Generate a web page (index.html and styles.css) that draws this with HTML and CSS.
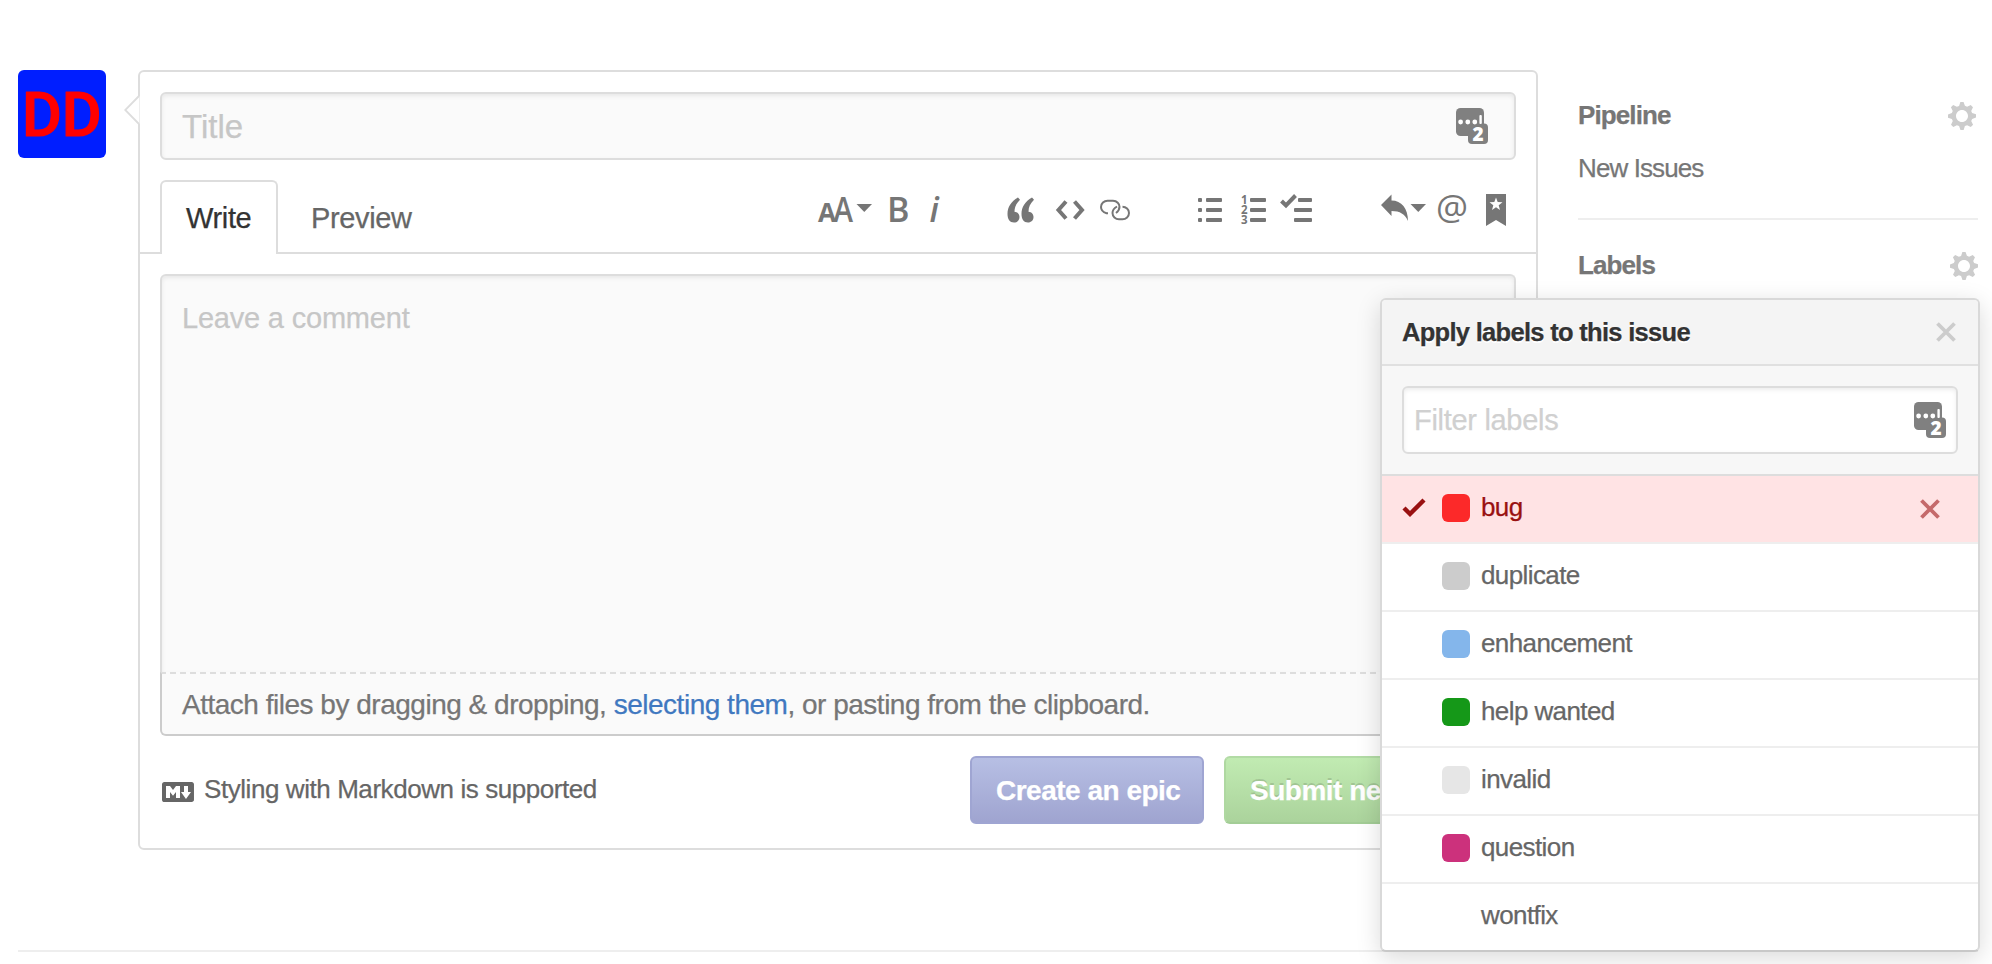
FILE: index.html
```html
<!DOCTYPE html>
<html lang="en">
<head>
<meta charset="utf-8">
<title>New Issue</title>
<link rel="stylesheet" href="styles.css">
</head>
<body>
<svg width="0" height="0" class="sprite" aria-hidden="true">
  <symbol id="gear" viewBox="0 1 14 14"><path fill-rule="evenodd" d="M14 8.77v-1.6l-1.94-.64-.45-1.09.88-1.84-1.13-1.13-1.81.91-1.09-.45-.69-1.92h-1.6l-.63 1.94-1.11.45-1.84-.88-1.13 1.13.91 1.81-.45 1.09L0 7.23v1.59l1.94.64.45 1.09-.88 1.84 1.13 1.13 1.81-.91 1.09.45.69 1.92h1.59l.63-1.94 1.11-.45 1.84.88 1.13-1.13-.92-1.81.47-1.09L14 8.75zM7 11c-1.66 0-3-1.34-3-3s1.34-3 3-3 3 1.34 3 3-1.34 3-3 3z"/></symbol>
  <symbol id="cross" viewBox="0 0 20 20"><path d="M1.500 1.500l17 17M18.500 1.500l-17 17" fill="none" stroke="currentColor" stroke-width="3.800"/></symbol>
  <symbol id="vault" viewBox="0 0 32 36">
    <rect width="28" height="28" rx="4.500"/><rect x="12" y="15.500" width="20" height="20.500" rx="4"/>
    <g fill="#fff"><circle cx="4.600" cy="14" r="2.400"/><circle cx="11.800" cy="14" r="2.400"/><circle cx="18.800" cy="14" r="2.400"/><rect x="23.400" y="7" width="2.400" height="9" rx="1"/></g>
  </symbol>
</svg>
<main class="page">
  <div class="columns">
    <svg class="avatar" viewBox="0 0 88 88"><text x="4" y="66" textLength="79.500" lengthAdjust="spacingAndGlyphs">DD</text></svg>
    <section class="composer">
      <svg class="pointer" viewBox="0 0 16 30"><path d="M15.500 1L1.200 15l14.300 14z" fill="#fff"/><path d="M15 1L1.200 15 15 29" fill="none" stroke="#ddd" stroke-width="1.800"/></svg>
      <div class="title-field"><span>Title</span><svg class="vault" viewBox="0 0 32 36"><use href="#vault"/><text x="22" y="33" text-anchor="middle" class="vault-count">2</text></svg></div>
      <div class="tabbar">
        <div class="tab active">Write</div>
        <div class="tab">Preview</div>
        <svg class="toolbar" viewBox="0 0 700 40">
          <g class="glyphs">
            <text x="2" y="32" font-size="27" font-weight="700" textLength="18" lengthAdjust="spacingAndGlyphs">A</text><text x="17.500" y="32" font-size="33.500" textLength="19.500" lengthAdjust="spacingAndGlyphs" font-weight="600">A</text>
            <path d="M40.500 14h15.500l-7.750 8z"/>
            <text x="71" y="32" font-size="33.500" font-weight="600" textLength="22.500" lengthAdjust="spacingAndGlyphs">B</text>
            <text x="113.500" y="32" font-size="34" font-style="italic" font-weight="600">i</text>
            <path d="M202 7.500l2 2.200c-4 4-5.500 7.500-5.500 12 3.300.2 5 2.700 5 5.300 0 3.200-2.300 5.500-5.500 5.500-4.200 0-6.500-3.500-6.500-8.500 0-7 3.500-12.500 10.500-16.500z"/>
            <path d="M216 7.500l2 2.200c-4 4-5.500 7.500-5.500 12 3.300.2 5 2.700 5 5.300 0 3.200-2.300 5.500-5.500 5.500-4.200 0-6.500-3.500-6.500-8.500 0-7 3.500-12.500 10.500-16.500z"/>
            <path d="M250 11.500l-7.500 8.500 7.500 8.500M258.500 11.500l7.500 8.500-7.500 8.500" class="line" stroke-width="4"/>
            <path d="M292 23.200h-1.500c-3.500-1-5.500-3.200-5.500-6.200 0-3.500 3-6.200 6.500-6.200h5.500c4 0 6.500 3 6.500 6 0 3-1.500 4.700-3.500 6.200M301 16.500c-2.500 1.500-4.500 3.500-4.500 6.500 0 3.500 3 6.200 6.500 6.200h3.500c3.500 0 6.500-2.700 6.500-6.200 0-3.500-3-6.200-6.500-6.200" class="line" stroke-width="2"/>
            <g><rect x="382" y="8" width="4" height="4" rx="1"/><rect x="382" y="18" width="4" height="4" rx="1"/><rect x="382" y="28" width="4" height="4" rx="1"/><rect x="390" y="8" width="16" height="4" rx="1"/><rect x="390" y="18" width="16" height="4" rx="1"/><rect x="390" y="28" width="16" height="4" rx="1"/></g>
            <g font-size="11.500" font-weight="700"><text x="425" y="14.300">1</text><text x="425" y="24.300">2</text><text x="425" y="34.300">3</text></g>
            <g><rect x="434" y="8" width="16" height="4" rx="1"/><rect x="434" y="18" width="16" height="4" rx="1"/><rect x="434" y="28" width="16" height="4" rx="1"/></g>
            <path d="M465.500 11l4.500 4.500L479.500 5.500" class="line" stroke-width="4"/><rect x="482" y="8" width="14" height="4" rx="1"/><rect x="478" y="18" width="18" height="4" rx="1"/><rect x="478" y="28" width="18" height="4" rx="1"/>
            <path d="M565 15L575.500 4.500v6c10 0 16.500 8 16.500 20.500-3-7-8-10-16.500-10v5z"/><path d="M594.500 14h15.500l-7.750 8z"/>
            <text x="620" y="29.500" font-size="35.500" textLength="32" lengthAdjust="spacingAndGlyphs">@</text>
            <path d="M670 4h20v32l-10-6-10 6z"/><path d="M680 7.500l1.700 4.600 4.800.2-3.800 3 1.300 4.700-4-2.700-4 2.700 1.300-4.700-3.800-3 4.800-.2z" fill="#fff"/>
          </g>
        </svg>
      </div>
      <div class="comment-field">Leave a comment</div>
      <div class="attach">Attach files by dragging &amp; dropping, <a>selecting them</a>, or pasting from the clipboard.</div>
      <div class="actions">
        <div class="markdown"><svg class="md" viewBox="0 3 16 10"><path fill-rule="evenodd" d="M14.850 3H1.150C.52 3 0 3.520 0 4.150v7.690C0 12.480.52 13 1.150 13h13.690c.64 0 1.150-.52 1.150-1.150v-7.700C16 3.520 15.480 3 14.850 3zM9 11H7V8L5.500 9.920 4 8v3H2V5h2l1.500 2L7 5h2v6zm2.990.5L9.500 8H11V5h2v3h1.500l-2.510 3.500z"/></svg><span>Styling with Markdown is supported</span></div>
        <div class="button epic">Create an epic</div>
        <div class="button submit">Submit new issue</div>
      </div>
    </section>
    <aside class="sidebar">
      <section class="side-block pipeline">
        <header>Pipeline<svg class="gear shifted"><use href="#gear"/></svg></header>
        <p>New Issues</p>
      </section>
      <section class="side-block labels">
        <header>Labels<svg class="gear"><use href="#gear"/></svg></header>
        <div class="menu">
          <div class="menu-header">Apply labels to this issue<svg class="cross"><use href="#cross"/></svg></div>
          <div class="menu-filter"><div class="filter-field"><span>Filter labels</span><svg class="vault" viewBox="0 0 32 36"><use href="#vault"/><text x="22" y="33" text-anchor="middle" class="vault-count">2</text></svg></div></div>
          <ul>
            <li class="selected"><svg class="check" viewBox="0 0 24 20"><path d="M2 10l6 6L22 2" fill="none" stroke="currentColor" stroke-width="4.400"/></svg><i class="swatch red"></i><span>bug</span><svg class="cross"><use href="#cross"/></svg></li>
            <li><i class="swatch gray"></i><span>duplicate</span></li>
            <li><i class="swatch blue"></i><span>enhancement</span></li>
            <li><i class="swatch green"></i><span>help wanted</span></li>
            <li><i class="swatch light"></i><span>invalid</span></li>
            <li><i class="swatch pink"></i><span>question</span></li>
            <li><i class="swatch"></i><span>wontfix</span></li>
          </ul>
        </div>
      </section>
    </aside>
  </div>
  <hr class="rule">
</main>
</body>
</html>
```
FILE: styles.css
```css
* { box-sizing: border-box; }
body {
  margin: 0;
  background: #fff;
  color: #666;
  font: 26px "Liberation Sans", Arial, sans-serif;
  -webkit-text-stroke: .25px currentColor;
  overflow: hidden;
}
svg { fill: currentColor; display: block; flex: none; -webkit-text-stroke: 0; }
.sprite { position: absolute; }
.page { height: 964px; padding: 70px 14px 0 18px; }
.columns { display: flex; align-items: flex-start; height: 880px; }

.avatar {
  width: 88px;
  height: 88px;
  margin-right: 32px;
  border-radius: 6px;
  background: #001eff;
  fill: #f00;
  font: 500 62px Roboto, sans-serif;
}
.avatar text { stroke: #f00; stroke-width: 1.2px; stroke-linejoin: round; }

.composer {
  position: relative;
  width: 1400px;
  height: 780px;
  padding-top: 20px;
  border: 2px solid #ddd;
  border-radius: 6px;
}
.pointer { position: absolute; left: -16px; top: 23px; width: 16px; height: 30px; }
.title-field, .comment-field, .filter-field {
  border: 2px solid #ddd;
  border-radius: 6px;
  background: #fafafa;
  box-shadow: inset 0 2px 4px rgba(0, 0, 0, .075);
  color: #c6c6c6;
}
.title-field {
  display: flex;
  justify-content: space-between;
  height: 68px;
  margin: 0 20px;
  padding: 14px 26px 0 20px;
  font-size: 33px;
  line-height: 38px;
}
.vault { width: 32px; height: 36px; color: #808080; overflow: visible; }
.vault-count { fill: #fff; font: 800 19px "Open Sans", sans-serif; letter-spacing: 0; }

.tabbar {
  display: flex;
  height: 74px;
  margin-top: 20px;
  padding: 0 2px 0 20px;
  box-shadow: inset 0 -2px #ddd;
}
.tab { padding: 21px 33px 0; font-size: 29px; line-height: 34px; letter-spacing: -.35px; }
.tab.active {
  width: 118px;
  padding: 19px 0 0 24px;
  border: 2px solid #ddd;
  border-bottom: 0;
  border-radius: 6px 6px 0 0;
  background: #fff;
  color: #333;
}
.toolbar { width: 700px; height: 40px; margin: 10px 18px 0 auto; overflow: visible; color: #767676; letter-spacing: 0; }
.glyphs { font-family: "Open Sans", sans-serif; }
.line { fill: none; stroke: currentColor; }

.comment-field {
  height: 398px;
  margin: 20px 20px 0;
  padding: 26px 20px;
  border-bottom: 0;
  border-radius: 6px 6px 0 0;
  font-size: 29px;
  line-height: 33px;
  letter-spacing: -.2px;
}
.attach {
  height: 64px;
  margin: 0 20px;
  padding: 15px 20px 0;
  border: 2px solid #ccc;
  border-top: 2px dashed #ddd;
  border-radius: 0 0 6px 6px;
  background: #fafafa;
  color: #767676;
  font-size: 28px;
  line-height: 32px;
  letter-spacing: -.49px;
}
.attach a { color: #4078c0; }

.actions { display: flex; align-items: flex-start; padding: 20px 20px 0; gap: 20px; }
.markdown { display: flex; margin: 18px auto 0 2px; gap: 10px; line-height: 30px; letter-spacing: -.43px; }
.md { width: 32px; height: 20px; margin-top: 8px; }
.button {
  height: 68px;
  border: 2px solid;
  border-radius: 6px;
  color: #fff;
  font-weight: bold;
  font-size: 28px;
  line-height: 65px;
  letter-spacing: -.5px;
  white-space: nowrap;
}
.epic { width: 234px; padding-left: 24px; border-color: #9fa5d2; background: linear-gradient(#b7bfe4, #9fa4d0); }
.submit {
  width: 292px;
  padding-left: 24px;
  border-color: #b2dba5 #afd8a1 #a3cd96;
  background: linear-gradient(#c1ebb2, #abd39c);
  text-shadow: 0 -2px rgba(0, 0, 0, .12);
}

.sidebar { width: 400px; margin-left: 40px; color: #767676; }
.side-block header {
  display: flex;
  justify-content: space-between;
  font-weight: bold;
  line-height: 29px;
  letter-spacing: -.9px;
}
.pipeline { height: 150px; padding-top: 31px; border-bottom: 2px solid #eee; }
.pipeline p { margin: 24px 0 0; line-height: 29px; letter-spacing: -.9px; }
.gear { width: 28px; height: 28px; color: #ccc; }
.gear.shifted { margin: 1px 2px 0 0; }
.labels { position: relative; padding-top: 32px; }
.labels header { height: 28px; line-height: 27px; }

.menu {
  position: absolute;
  right: -2px;
  top: 78px;
  width: 600px;
  border: 2px solid #d9d9d9;
  border-bottom-color: #c8c8c8;
  border-radius: 6px;
  background: #fff;
  box-shadow: 0 6px 24px rgba(0, 0, 0, .15);
  overflow: hidden;
}
.menu-header {
  display: flex;
  justify-content: space-between;
  align-items: center;
  height: 66px;
  padding: 0 22px 0 20px;
  border-bottom: 2px solid #e0e0e0;
  background: #f4f4f4;
  color: #333;
  font-size: 25.5px;
  font-weight: bold;
  letter-spacing: -.7px;
  text-shadow: 0 2px #fff;
}
.cross { width: 20px; height: 20px; color: #ccc; }
.menu-filter { height: 110px; padding: 20px 20px 0; border-bottom: 2px solid #ddd; background: #f7f7f7; }
.filter-field {
  display: flex;
  justify-content: space-between;
  height: 68px;
  padding: 14px 10px 0;
  background: #fff;
  color: #d0d0d0;
  font-size: 29px;
  line-height: 36px;
  letter-spacing: -.3px;
}
.menu ul { margin: 0; padding: 0; list-style: none; }
.menu li {
  display: flex;
  align-items: center;
  height: 68px;
  padding: 0 38px 2px 60px;
  border-bottom: 2px solid #eee;
  color: #666;
  letter-spacing: -.6px;
}
.menu li span { padding: 0 0 2px 1px; }
.menu li:last-child { height: 66px; border-bottom: 0; }
.menu .selected { padding-left: 20px; background: #ffe3e4; color: #911; }
.check { width: 24px; height: 20px; margin-right: 16px; }
.swatch { width: 28px; height: 28px; margin-right: 10px; border-radius: 6px; }
.selected .cross { margin: 2px 0 0 auto; color: #c56a6b; }
.red { background: #fc2929; }
.gray { background: #ccc; }
.blue { background: #84b6eb; }
.green { background: #159818; }
.light { background: #e6e6e6; }
.pink { background: #cc317c; }

.rule { width: 1960px; height: 2px; margin: 0; border: 0; background: #eee; }
```
